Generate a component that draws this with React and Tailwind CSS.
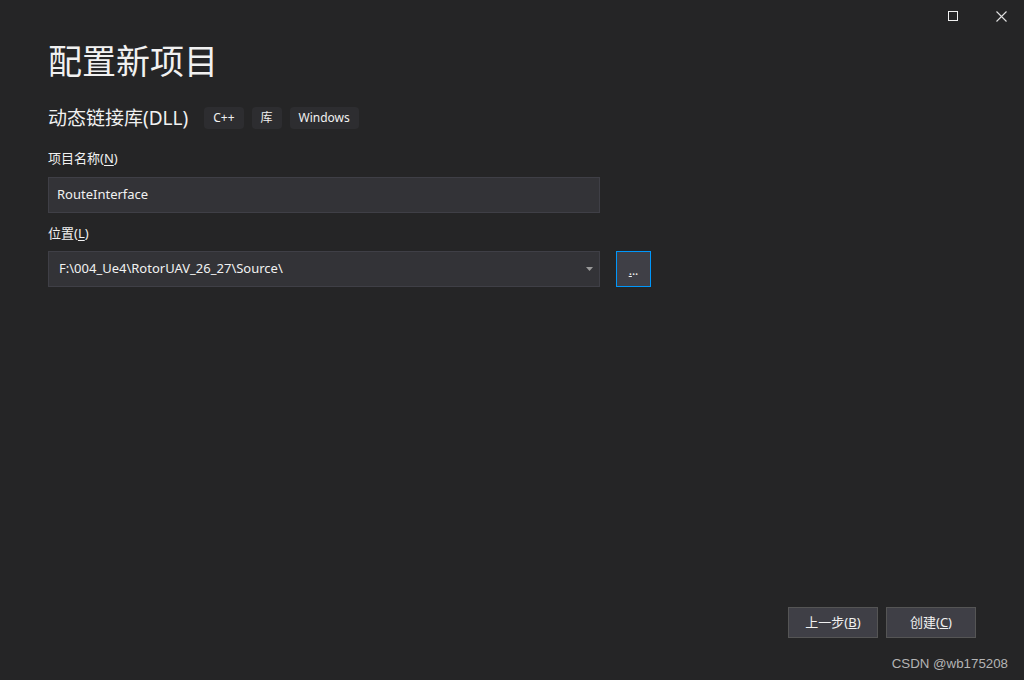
import React from "react";

const cjk = { fontFamily: '"Segoe UI", "Noto Sans", "Noto Sans CJK SC", sans-serif' };

function Tag({ children }) {
  return (
    <span className="h-[22px] px-[9px] flex items-center rounded-[4px] bg-[#2d2d30] text-[12px] text-[#f1f1f1]">
      {children}
    </span>
  );
}

export default function App() {
  return (
    <div className="w-[1024px] h-[680px] bg-[#252526] flex flex-col text-[#f1f1f1] overflow-hidden" style={cjk}>
      <div className="h-[32px] flex justify-end items-center gap-[2px]">
        <div className="w-[46px] h-[32px] flex items-center justify-center">
          <div className="w-[10px] h-[10px] border border-[#f1f1f1]" />
        </div>
        <div className="w-[46px] h-[32px] flex items-center justify-center">
          <svg width="11" height="11" viewBox="0 0 11 11">
            <path d="M0.5 0.5 L10.5 10.5 M10.5 0.5 L0.5 10.5" stroke="#e0e0e0" strokeWidth="1.1" />
          </svg>
        </div>
      </div>
      <div className="pl-[48px] flex flex-col flex-1">
        <div className="mt-[9px] text-[34px] leading-[40px] text-[#f1f1f1]">配置新项目</div>
        <div className="mt-[23px] h-[28px] flex items-center">
          <span className="text-[19px] leading-[28px] mr-[16px]">动态链接库(DLL)</span>
          <div className="flex gap-[8px]">
            <Tag>C++</Tag>
            <Tag>库</Tag>
            <Tag>Windows</Tag>
          </div>
        </div>
        <div className="mt-[17px] text-[13px] leading-[18px]">
          项目名称(<span className="underline underline-offset-2">N</span>)
        </div>
        <div className="mt-[10px] w-[552px] h-[36px] bg-[#333337] border border-[#3f3f46] flex items-center px-[8px] text-[13px]">
          RouteInterface
        </div>
        <div className="mt-[11px] text-[13px] leading-[18px]">
          位置(<span className="underline underline-offset-2">L</span>)
        </div>
        <div className="mt-[9px] flex gap-[16px]">
          <div className="w-[552px] h-[36px] bg-[#333337] border border-[#3f3f46] flex items-center pl-[10px] pr-[6px] text-[13px]">
            <span className="flex-1">F:\004_Ue4\RotorUAV_26_27\Source\</span>
            <svg width="7" height="4" viewBox="0 0 7 4">
              <path d="M0 0 H7 L3.5 4 Z" fill="#9a9a9a" />
            </svg>
          </div>
          <div className="w-[35px] h-[36px] bg-[#3f3f46] border border-[#0097fb] flex items-center justify-center text-[12px] leading-none">
            <span className="mt-[4px]"><span className="underline">.</span>..</span>
          </div>
        </div>
        <div className="flex-1" />
        <div className="flex justify-end gap-[8px] pr-[48px]">
          <button className="w-[90px] h-[31px] bg-[#3f3f46] border border-[#555555] text-[13px] text-[#f1f1f1]" style={cjk}>
            上一步(<span className="underline">B</span>)
          </button>
          <button className="w-[90px] h-[31px] bg-[#3f3f46] border border-[#555555] text-[13px] text-[#f1f1f1]" style={cjk}>
            创建(<span className="underline">C</span>)
          </button>
        </div>
        <div className="mt-[18px] mb-[8px] flex justify-end pr-[16px] h-[16px] text-[13.3px] leading-[16px] text-[#b4b4b4]" style={{ fontFamily: '"Liberation Sans", Arial, sans-serif' }}>
          CSDN @wb175208
        </div>
      </div>
    </div>
  );
}
